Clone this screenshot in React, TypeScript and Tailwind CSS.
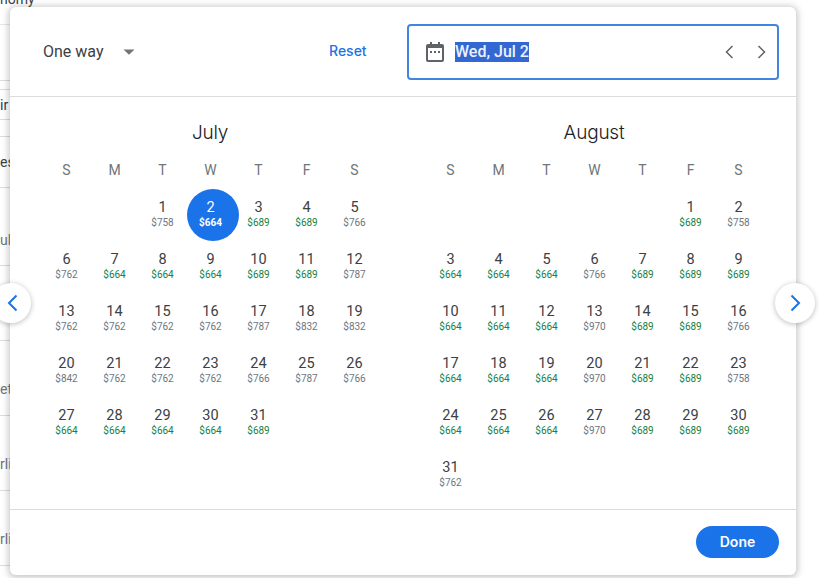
const G = new Set(["664", "689"]);
const july: [number, string][] = ["758","664","689","689","766","762","664","664","664","689","689","787","762","762","762","762","787","832","832","842","762","762","762","766","787","766","664","664","664","664","689"].map((p, i) => [i + 1, p]);
const august: [number, string][] = ["689","758","664","664","664","766","689","689","689","664","664","664","970","689","689","766","664","664","664","970","689","689","758","664","664","664","970","689","689","689","762"].map((p, i) => [i + 1, p]);

function Month({ name, start, days, selected }: { name: string; start: number; days: [number, string][]; selected?: number }) {
  return (
    <div className="w-[336px] flex flex-col">
      <div className="h-[24px] mt-[24px] flex items-center justify-center text-[19px] font-light text-[#202124] font-['Inter',sans-serif] tracking-[-0.2px]">{name}</div>
      <div className="grid grid-cols-7 mt-[13px] h-[24px] items-center text-center text-[14px] text-[#70757a]">
        {["S", "M", "T", "W", "T", "F", "S"].map((d, i) => <div key={i} className="pl-[1px]">{d}</div>)}
      </div>
      <div className="grid grid-cols-7 mt-[7px] auto-rows-[52px]">
        {Array.from({ length: start }).map((_, i) => <div key={i} />)}
        {days.map(([d, p]) => {
          const sel = d === selected;
          return (
            <div key={d} className="relative flex flex-col items-center justify-center pb-[3px] pl-[1px]">
              {sel && <div className="absolute left-[1px] top-0 w-[52px] h-[52px] rounded-full bg-[#1a73e8]" />}
              <span className={sel ? "relative text-[14.5px] leading-[17px] text-white" : "relative text-[14.5px] leading-[17px] text-[#3c4043]"}>{d}</span>
              <span className={sel ? "relative text-[10px] leading-[13px] font-bold text-white" : G.has(p) ? "relative text-[10px] leading-[13px] text-[#188038]" : "relative text-[10px] leading-[13px] text-[#70757a]"}>${p}</span>
            </div>
          );
        })}
      </div>
    </div>
  );
}

export default function App() {
  return (
    <div className="relative w-[820px] h-[578px] overflow-hidden bg-white font-['Roboto',sans-serif]">
      <div className="flex flex-col w-[40px]">
        <div className="h-[25px] border-b border-[#e4e6e9] text-[14px] leading-[14px] text-[#3c4043] overflow-hidden whitespace-nowrap"><span className="block -mt-[8px]">nomy</span></div>
        <div className="h-[55px]" />
        <div className="h-[9px] border-t border-[#dadce0]" />
        <div className="h-[31px] border-t border-b border-[#dadce0] text-[14px] leading-[31px] text-[#1f3a5f] overflow-hidden">ir</div>
        <div className="h-[17px] border-b border-[#dadce0]" />
        <div className="h-[51px] border-b border-[#dadce0] text-[14px] leading-[50px] text-[#3c4043] overflow-hidden">es</div>
        <div className="h-[78px] border-b border-[#dadce0] text-[14px] leading-[105px] text-[#70757a] overflow-hidden">ul</div>
        <div className="h-[75px] border-b border-[#dadce0]" />
        <div className="h-[75px] border-b border-[#dadce0] text-[14px] leading-[96px] text-[#70757a] overflow-hidden">et</div>
        <div className="h-[75px] border-b border-[#dadce0] text-[14px] leading-[96px] text-[#70757a] overflow-hidden">rli</div>
        <div className="h-[75px] border-b border-[#dadce0] text-[14px] leading-[96px] text-[#70757a] overflow-hidden">rli</div>
      </div>

      <div className="absolute left-[10px] top-[7px] w-[786px] h-[568px] bg-white rounded-[6px] shadow-[0_1px_6px_2px_rgba(60,64,67,0.28)] flex flex-col">
        <div className="h-[90px] shrink-0 border-b border-[#dadce0] flex items-center pl-[33px] pr-[17px]">
          <span className="text-[16px] text-[#3c4043] w-[70px]">One way</span>
          <svg className="ml-[10px]" width="12" height="6" viewBox="0 0 12 6"><path d="M0.5 0.5h11L6 5.8z" fill="#70757a" /></svg>
          <span className="ml-[194px] -mt-[2px] text-[14px] font-medium text-[#1a73e8] font-['Inter',sans-serif] w-[40px]">Reset</span>
          <div className="ml-auto w-[372px] h-[56px] rounded-[4px] border-2 border-[#4285e0] flex items-center pl-[17px] pr-[11px]">
            <svg width="18" height="20" viewBox="0 0 18 20" className="shrink-0">
              <path fill="#5f6368" d="M4 0h2v2h6V0h2v2h2a2 2 0 0 1 2 2v14a2 2 0 0 1-2 2H2a2 2 0 0 1-2-2V4a2 2 0 0 1 2-2h2z" />
              <rect x="2" y="6" width="14" height="12" fill="#fff" />
              <rect x="4" y="9" width="2" height="2" fill="#5f6368" />
              <rect x="8" y="9" width="2" height="2" fill="#5f6368" />
              <rect x="12" y="9" width="2" height="2" fill="#5f6368" />
            </svg>
            <span className="ml-[11px] text-[16px] font-medium leading-[20px] bg-[#3367d1] text-[#eaf2ff] whitespace-nowrap">Wed, Jul 2</span>
            <div className="ml-auto flex items-center gap-[23px]">
              <svg width="9" height="14" viewBox="0 0 9 14" fill="none" stroke="#5f6368" strokeWidth="1.5"><path d="M7.5 1 1.5 7l6 6" /></svg>
              <svg width="9" height="14" viewBox="0 0 9 14" fill="none" stroke="#5f6368" strokeWidth="1.5"><path d="M1.5 1l6 6-6 6" /></svg>
            </div>
          </div>
        </div>

        <div className="flex-1 flex pl-[32px] gap-[48px]">
          <Month name="July" start={2} days={july} selected={2} />
          <Month name="August" start={5} days={august} />
        </div>

        <div className="h-[66px] shrink-0 border-t border-[#dadce0] flex items-center justify-end pr-[17px] pb-[2px]">
          <button className="w-[83px] h-[32px] rounded-full bg-[#1a73e8] text-white text-[14px] font-semibold font-['Inter',sans-serif]">Done</button>
        </div>
      </div>

      <button className="absolute left-[-9px] top-[283px] w-[40px] h-[40px] rounded-full bg-white shadow-[0_1px_4px_1px_rgba(60,64,67,0.25)] flex items-center justify-center pl-[2px]">
        <svg width="11" height="18" viewBox="0 0 11 18" fill="none" stroke="#1a73e8" strokeWidth="2"><path d="M9.5 1.5 2 9l7.5 7.5" /></svg>
      </button>
      <button className="absolute left-[775px] top-[283px] w-[40px] h-[40px] rounded-full bg-white shadow-[0_1px_4px_1px_rgba(60,64,67,0.25)] flex items-center justify-center">
        <svg width="11" height="18" viewBox="0 0 11 18" fill="none" stroke="#1a73e8" strokeWidth="2"><path d="M1.5 1.5 9 9l-7.5 7.5" /></svg>
      </button>
    </div>
  );
}
